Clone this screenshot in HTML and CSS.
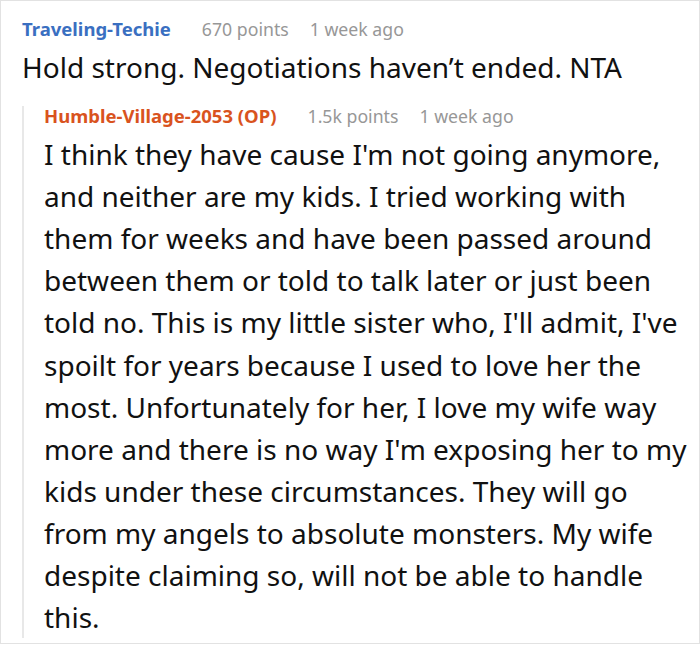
FILE: index.html
```html
<!DOCTYPE html>
<html>
<head>
<meta charset="utf-8">
<link rel="stylesheet" href="styles.css">
</head>
<body>
<div class="card">
  <div class="comment">
    <div class="meta">
      <span class="author">Traveling-Techie</span>
      <span class="info">670 points</span>
      <span class="info">1 week ago</span>
    </div>
    <p class="text lead">Hold strong. Negotiations haven’t ended. NTA</p>
    <div class="reply">
      <div class="meta">
        <span class="author op">Humble-Village-2053 (OP)</span>
        <span class="info">1.5k points</span>
        <span class="info">1 week ago</span>
      </div>
      <p class="text body">I think they have cause I'm not going anymore, and neither are my kids. I tried working with them for weeks and have been passed around between them or told to talk later or just been told no. This is my little sister who, I'll admit, I've spoilt for years because I used to love her the most. Unfortunately for her, I love my wife way more and there is no way I'm exposing her to my kids under these circumstances. They will go from my angels to absolute monsters. My wife despite claiming so, will not be able to handle this.</p>
    </div>
  </div>
</div>
</body>
</html>
```
FILE: styles.css
```css
html, body {
  margin: 0;
  padding: 0;
  background: #fff;
}
.card {
  box-sizing: border-box;
  width: 700px;
  height: 644px;
  border: 1px solid #e2e2e2;
  font-family: "Noto Sans", "Open Sans", sans-serif;
  color: #111;
}
.comment {
  padding: 18px 8px 0 21px;
}
.meta {
  display: flex;
  align-items: baseline;
  gap: 21px;
  font-size: 18.5px;
  line-height: 20px;
}
.author {
  font-weight: 700;
  color: #3a6fc1;
  margin-right: 10px;
}
.author.op {
  color: #d9531e;
}
.info {
  color: #979797;
  font-size: 17.7px;
}
.text {
  margin: 0;
  font-size: 28px;
  line-height: 42.1px;
}
.lead {
  margin-top: 7px;
}
.reply {
  margin-top: 28px;
  border-left: 2px solid #e8e8e8;
  padding-left: 20px;
}
.reply .meta {
  margin-top: -10px;
  margin-bottom: 7px;
}
.body {
  margin-bottom: -9px;
}
```
